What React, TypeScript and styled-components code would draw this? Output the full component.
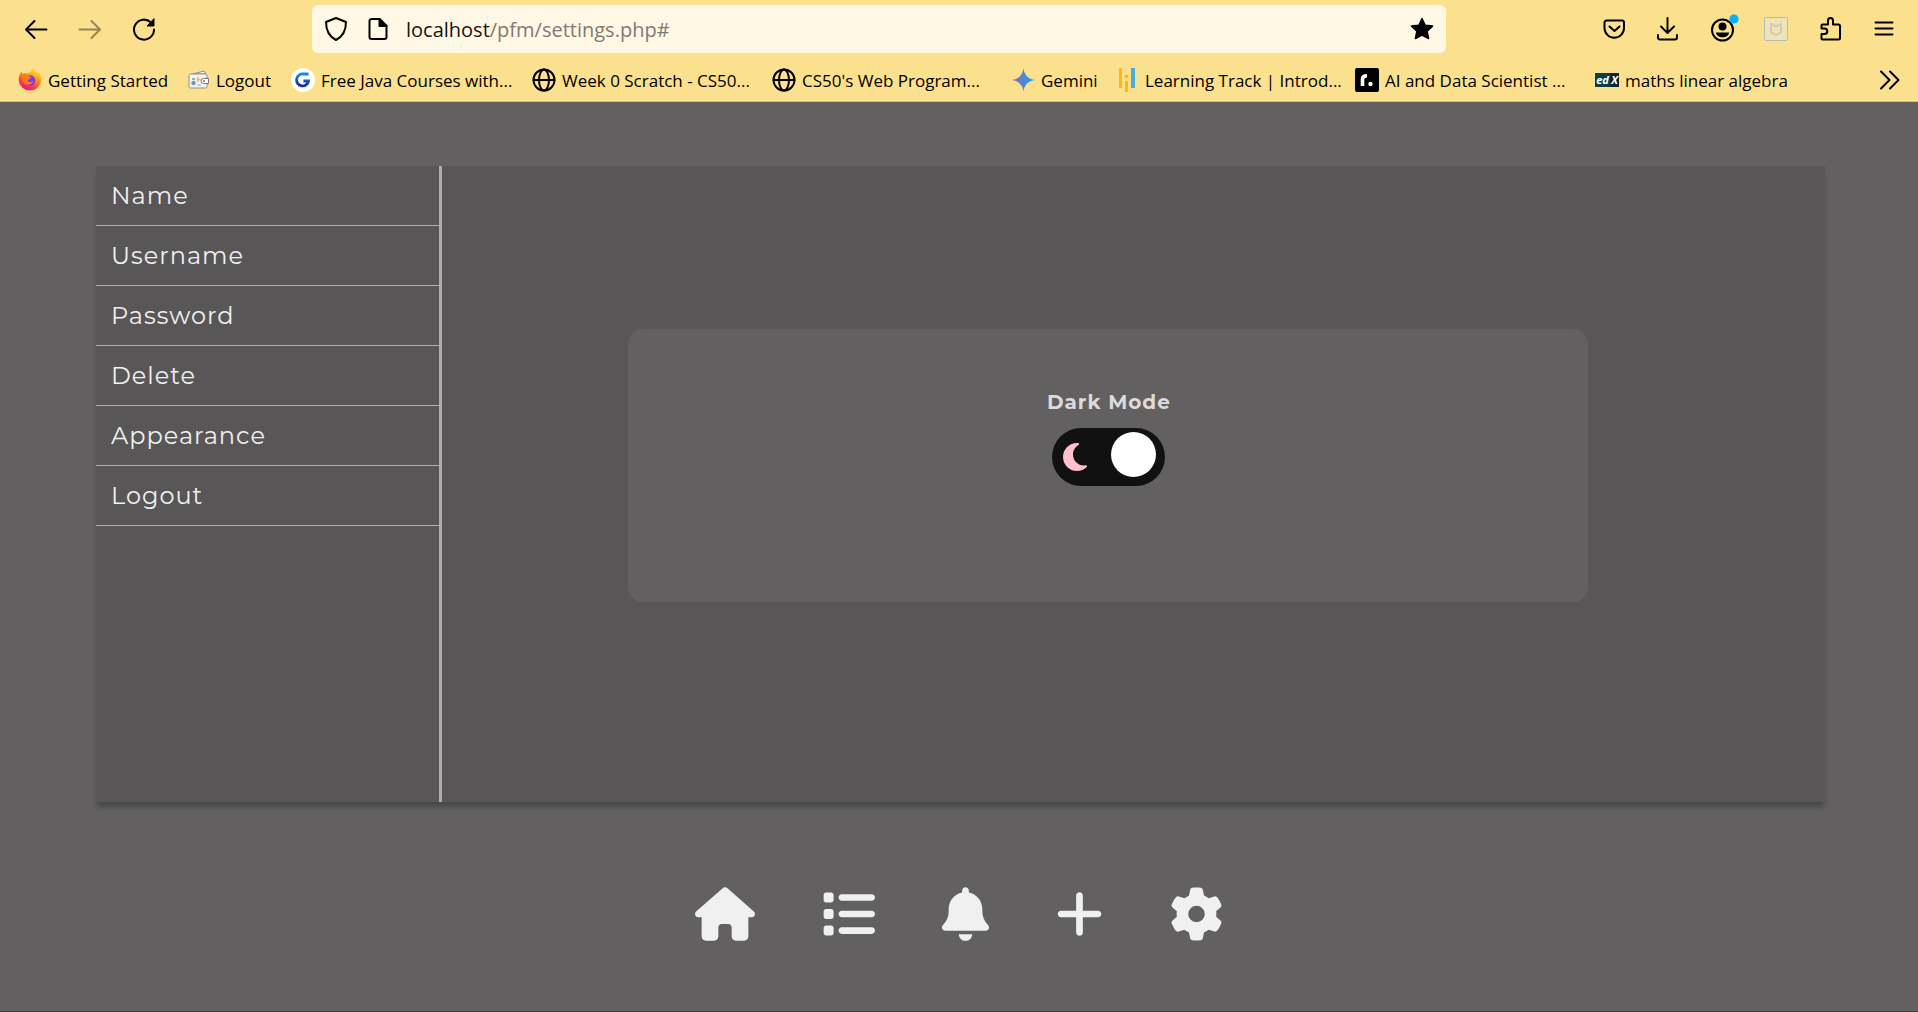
import React from "react";
import styled, { createGlobalStyle } from "styled-components";
import { FaHouse, FaList, FaBell, FaPlus, FaGear, FaMoon } from "react-icons/fa6";

const chromeFont = `"Segoe UI", "Open Sans", "Noto Sans", sans-serif`;

const GlobalStyle = createGlobalStyle`
  *, *::before, *::after { box-sizing: border-box; }
  html, body { margin: 0; padding: 0; }
  body { background: #636061; font-family: Montserrat, Inter, "Open Sans", sans-serif; }
  a { color: inherit; text-decoration: none; }
  ul { list-style: none; margin: 0; padding: 0; }
`;

const Page = styled.div`
  min-height: 100vh;
  display: flex;
  flex-direction: column;
  border-bottom: 1px solid #3c3b3b;
`;

const Chrome = styled.header`
  background: #fbe08d;
  border-bottom: 1px solid #dcc067;
  font-family: ${chromeFont};
  color: #15141a;
`;

const Toolbar = styled.div`
  display: flex;
  align-items: center;
  height: 58px;
  padding: 0 20px 0 22px;
`;

const Group = styled.div<{ $gap: number }>`
  display: flex;
  align-items: center;
  gap: ${(p) => p.$gap}px;
`;

const IconButton = styled.button<{ $faded?: boolean }>`
  display: flex;
  align-items: center;
  justify-content: center;
  width: 28px;
  height: 28px;
  padding: 0;
  border: 0;
  background: none;
  color: #000;
  opacity: ${(p) => (p.$faded ? 0.4 : 1)};

  svg { overflow: visible; }
`;

const AddressBar = styled.div`
  display: flex;
  align-items: center;
  flex: 1;
  height: 48px;
  margin: 0 154px;
  padding: 0 10px;
  gap: 14px;
  border-radius: 6px;
  background: #fff8e4;
`;

const AddressField = styled.div`
  position: relative;
  flex: 1;
  height: 30px;
  font-size: 20px;
  line-height: 32px;
`;

const AddressInput = styled.input`
  display: block;
  width: 100%;
  height: 30px;
  padding: 0;
  border: 0;
  outline: 0;
  background: none;
  font: inherit;
  color: transparent;
`;

const AddressText = styled.div`
  position: absolute;
  inset: 0;
  pointer-events: none;
  color: #7e7b74;
  white-space: nowrap;
`;

const Host = styled.span`
  color: #15141a;
`;

const Bookmarks = styled.nav`
  display: flex;
  align-items: center;
  height: 43px;
  padding: 0 14px 0 18px;
`;

const Bookmark = styled.a<{ $width: number }>`
  display: flex;
  align-items: center;
  gap: 6px;
  width: ${(p) => p.$width}px;
  font-size: 17px;
  line-height: 24px;
  color: #000;
  white-space: nowrap;
`;

const BookmarkText = styled.span`
  padding-top: 2px;
`;

const Push = styled.div`
  margin-left: auto;
`;

const Panel = styled.main`
  display: flex;
  min-height: 636px;
  margin: 64px 93px 0 96px;
  background: #595657;
  box-shadow: 0 6px 5px -1px #494848;
`;

const Sidebar = styled.nav`
  flex: 0 0 20%;
  border-right: 3px solid #b0aeae;
`;

const SidebarLink = styled.a`
  display: block;
  padding: 15px 15px 14px;
  border-bottom: 1px solid #b0aeae;
  font-size: 24px;
  line-height: 30px;
  letter-spacing: 1px;
  color: #f0f0f0;
`;

const Content = styled.section`
  flex: 1;
  padding: 163px 237px 200px 186px;
`;

const Card = styled.div`
  display: flex;
  flex-direction: column;
  align-items: center;
  height: 273px;
  padding: 60px 0 0 2px;
  border-radius: 15px;
  background: #636061;
`;

const ModeLabel = styled.label`
  display: flex;
  flex-direction: column;
  align-items: center;
  gap: 13px;
  font-size: 20px;
  font-weight: 700;
  line-height: 26px;
  letter-spacing: 1px;
  color: #dcdada;
`;

const Track = styled.span`
  display: flex;
  align-items: center;
  justify-content: space-between;
  width: 113px;
  height: 58px;
  padding: 0 9px 0 11px;
  border-radius: 29px;
  background: #111;
  color: pink;

  svg { width: 24px; height: 32px; }
`;

const Knob = styled.span`
  width: 45px;
  height: 45px;
  margin-bottom: 5px;
  border-radius: 50%;
  background: #fff;
`;

const HiddenCheckbox = styled.input`
  position: absolute;
  opacity: 0;
`;

const Dock = styled.nav`
  display: flex;
  justify-content: center;
  gap: 67px;
  margin: 85px 0 70px;
  color: #f0f0f0;
`;

const DockLink = styled.a<{ $width: number }>`
  display: flex;

  svg { width: ${(p) => p.$width}px; height: 54px; }
`;

type IconProps = { children: React.ReactNode; size?: number; box?: number };

const Line = ({ children, size = 24, box = 24 }: IconProps) => (
  <svg
    width={size}
    height={size}
    viewBox={`0 0 ${box} ${box}`}
    fill="none"
    stroke="currentColor"
    strokeWidth="2"
    strokeLinecap="round"
    strokeLinejoin="round"
    aria-hidden="true"
  >
    {children}
  </svg>
);

const Globe = () => (
  <Line>
    <circle cx="12" cy="12" r="10.5" />
    <ellipse cx="12" cy="12" rx="5" ry="10.5" />
    <path d="M1.5 12h21" />
  </Line>
);

const Firefox = () => (
  <svg width="24" height="24" viewBox="0 0 24 24" aria-hidden="true">
    <defs>
      <linearGradient id="flame" x1="0.8" y1="0" x2="0.3" y2="1">
        <stop offset="0" stopColor="#fff14a" />
        <stop offset="0.4" stopColor="#ff980e" />
        <stop offset="0.75" stopColor="#ff3647" />
        <stop offset="1" stopColor="#e31587" />
      </linearGradient>
    </defs>
    <path
      d="M15 0c2 2 3 3 3.600 5 1-.2 1.200-.8 1.400-1.400 2.600 3 3.400 6 3 10A11.300 11.300 0 0 1 .7 12.500C.5 8.500 2 5.500 3.500 3.500L4.500 6C6 4.800 7.500 5 8.500 5.500 10 6 11 4 13 4c0-1.500.8-3 2-4z"
      fill="url(#flame)"
    />
    <circle cx="12" cy="12.500" r="5.200" fill="#7a3be0" />
    <path d="M4.500 7c3-1 5.500 0 6.500 1.200 2 .2 2.500 1 2.400 1.800-2 .2-2.400 1.500-4 2.500 1.500 2 4 1.500 6 .5-1 3.500-6 5-9.500 2.500C4 13.500 4 10 4.500 7z" fill="#ff7a1c" />
  </svg>
);

const Wallet = () => (
  <svg width="22" height="22" viewBox="0 0 22 22" aria-hidden="true">
    <path d="M5 5L16 2l2 3z" fill="#fff" stroke="#8a8a8a" />
    <rect x="1" y="5" width="18" height="14" rx="1.500" fill="#f4f3ee" stroke="#8f8f8f" />
    <path d="M15.500 9.500h5v5h-5a2.500 2.500 0 0 1 0-5z" fill="#fff" stroke="#777" />
    <circle cx="16" cy="12" r="1" fill="#777" />
    <circle cx="5.500" cy="14" r="2.200" fill="#6a9db8" />
    <path d="M4 9h3v2H4z" fill="#8fb5c6" />
    <path d="M10 8v5M8.500 10.500h4" stroke="#f0bf55" strokeWidth="1.500" />
    <path d="M9 16h4" stroke="#b9c9b0" strokeWidth="1.500" />
  </svg>
);

const GreatLearning = () => (
  <svg width="24" height="24" viewBox="0 0 24 24" aria-hidden="true">
    <defs>
      <linearGradient id="gl" x1="0" y1="0" x2="0" y2="1">
        <stop offset="0" stopColor="#1c86e8" />
        <stop offset="1" stopColor="#1229a8" />
      </linearGradient>
    </defs>
    <circle cx="12" cy="12" r="12" fill="#fff" />
    <path d="M17.500 6h-5a6 6 0 1 0 5 7h-5" fill="none" stroke="url(#gl)" strokeWidth="2.800" />
  </svg>
);

const Gemini = () => (
  <svg width="23" height="24" viewBox="0 0 24 24" aria-hidden="true">
    <defs>
      <linearGradient id="gem" x1="0" y1="0.500" x2="1" y2="0.500">
        <stop offset="0" stopColor="#9168c0" />
        <stop offset="0.450" stopColor="#5684d1" />
        <stop offset="1" stopColor="#1ba1e3" />
      </linearGradient>
    </defs>
    <path d="M12 0c1 7 5 11 12 12-7 1-11 5-12 12-1-7-5-11-12-12 7-1 11-5 12-12z" fill="url(#gem)" />
  </svg>
);

const Bars = () => (
  <svg width="24" height="24" viewBox="0 0 24 24" aria-hidden="true">
    <path d="M4 0h3v20H4zM10 13h3v11h-3z" fill="#fbb914" />
    <circle cx="11.500" cy="8.500" r="2" fill="#fbb914" />
    <path d="M16 0h4v20h-4z" fill="#45aedb" />
  </svg>
);

const Roadmap = () => (
  <svg width="24" height="24" viewBox="0 0 24 24" aria-hidden="true">
    <rect width="24" height="24" rx="2" fill="#000" />
    <path d="M7.500 18v-7c0-2.200 1.500-3.300 4.500-3.300" fill="none" stroke="#fff" strokeWidth="3.600" />
    <circle cx="15.500" cy="16" r="2.200" fill="#fff" />
  </svg>
);

const Badge = styled.span`
  display: flex;
  width: 24px;
  color: #fff;
  font-size: 11px;
  font-style: italic;
  font-weight: 700;
  line-height: 13px;
`;

const BadgePart = styled.span<{ $dark?: boolean }>`
  flex: 1 0 auto;
  height: 14px;
  text-align: center;
  background: ${(p) => (p.$dark ? "#10262b" : "#0b4046")};
`;

const bookmarks = [
  { label: "Getting Started", width: 170, icon: <Firefox /> },
  { label: "Logout", width: 103, icon: <Wallet /> },
  { label: "Free Java Courses with...", width: 241, icon: <GreatLearning /> },
  { label: "Week 0 Scratch - CS50...", width: 240, icon: <Globe /> },
  { label: "CS50's Web Program...", width: 240, icon: <Globe /> },
  { label: "Gemini", width: 103, icon: <Gemini /> },
  { label: "Learning Track | Introd...", width: 240, icon: <Bars /> },
  { label: "AI and Data Scientist ...", width: 240, icon: <Roadmap /> },
  {
    label: "maths linear algebra",
    width: 240,
    icon: (
      <Badge>
        <BadgePart>ed</BadgePart>
        <BadgePart $dark>X</BadgePart>
      </Badge>
    ),
  },
];

const dock = [
  { label: "Home", width: 60, icon: <FaHouse /> },
  { label: "List", width: 53, icon: <FaList /> },
  { label: "Notifications", width: 47, icon: <FaBell /> },
  { label: "Add", width: 47, icon: <FaPlus /> },
  { label: "Settings", width: 53, icon: <FaGear /> },
];

const sections = ["Name", "Username", "Password", "Delete", "Appearance", "Logout"];

export default function App() {
  return (
    <Page>
      <GlobalStyle />
      <Chrome>
        <Toolbar>
          <Group $gap={26}>
            <IconButton aria-label="Back">
              <Line><path d="M22.500 12.500H2M10.500 4L2 12.500l8.500 8.500" /></Line>
            </IconButton>
            <IconButton aria-label="Forward" $faded>
              <Line><path d="M1.500 12.500H22M13.500 4l8.500 8.500-8.500 8.500" /></Line>
            </IconButton>
            <IconButton aria-label="Reload">
              <Line>
                <path d="M22 12.500A10 10 0 1 1 19 5.500" />
                <path d="M22 2v7h-6.500z" fill="currentColor" strokeWidth="1" />
              </Line>
            </IconButton>
          </Group>
          <AddressBar>
            <IconButton aria-label="Tracking protection">
              <Line><path d="M12 1L22 5c0 8-2 14-10 18C4 19 2 13 2 5z" /></Line>
            </IconButton>
            <IconButton aria-label="Site information">
              <Line>
                <path d="M5.500 2h8L20.500 9v11a2 2 0 0 1-2 2h-13a2 2 0 0 1-2-2V4a2 2 0 0 1 2-2z" />
                <path d="M13.500 2v7h7z" fill="currentColor" />
              </Line>
            </IconButton>
            <AddressField>
              <AddressInput aria-label="Address" />
              <AddressText>
                <Host>localhost</Host>/pfm/settings.php#
              </AddressText>
            </AddressField>
            <IconButton aria-label="Edit bookmark">
              <svg width="24" height="24" viewBox="0 0 24 24" aria-hidden="true">
                <path d="M12 1.500l3.200 6.700 7.300.9-5.400 5 1.500 7.400L12 18l-6.600 3.500 1.500-7.400-5.400-5 7.300-.9z" stroke="#000" strokeWidth="1.500" strokeLinejoin="round" />
              </svg>
            </IconButton>
          </AddressBar>
          <Group $gap={26}>
            <IconButton aria-label="Pocket">
              <Line>
                <path d="M4.500 3.500H20a2 2 0 0 1 2 2v5.500a9.700 9.700 0 0 1-19.500 0V5.500a2 2 0 0 1 2-2z" />
                <path d="M7.500 9.500l5 4.500 5-4.500" />
              </Line>
            </IconButton>
            <IconButton aria-label="Downloads">
              <Line><path d="M11.500 1v14.500M5 9.500l6.500 6.500L18 9.500M2 18v2.500a2 2 0 0 0 2 2h15a2 2 0 0 0 2-2V18" /></Line>
            </IconButton>
            <IconButton aria-label="Account">
              <svg width="28" height="28" viewBox="0 0 28 28" fill="none" aria-hidden="true">
                <circle cx="14.500" cy="15" r="10.500" stroke="#000" strokeWidth="2" />
                <circle cx="14.500" cy="11.500" r="4" fill="#000" />
                <path d="M8 17.500h13c0 3-3 4.800-6.500 4.800S8 20.500 8 17.500z" fill="#000" />
                <circle cx="26" cy="4" r="4.600" fill="#00b3ff" />
              </svg>
            </IconButton>
            <IconButton aria-label="Web protection">
              <svg width="24" height="24" viewBox="0 0 24 24" fill="none" aria-hidden="true">
                <rect x="0.500" y="0.500" width="23" height="23" rx="1" fill="#f0e3b6" stroke="#b3bcbd" />
                <path d="M7 7l5 2.500L17 7v8.500l-5 2.500-5-2.500z" stroke="#d0ccb8" strokeWidth="2" />
              </svg>
            </IconButton>
            <IconButton aria-label="Extensions">
              <Line>
                <path d="M4.500 22.500a1 1 0 0 1-1-1V17h3a2.800 2.800 0 0 0 0-5.600h-3V8.500a1 1 0 0 1 1-1H10V3.500a2.500 2.500 0 0 1 5 0v4h5.500A1.500 1.500 0 0 1 22 9v12a1.500 1.500 0 0 1-1.500 1.500z" />
              </Line>
            </IconButton>
            <IconButton aria-label="Menu">
              <Line><path d="M3.500 5.500h17M3.500 11.500h17M3.500 17.500h17" /></Line>
            </IconButton>
          </Group>
        </Toolbar>
        <Bookmarks aria-label="Bookmarks">
          {bookmarks.map((b) => (
            <Bookmark key={b.label} href="#" $width={b.width}>
              {b.icon}
              <BookmarkText>{b.label}</BookmarkText>
            </Bookmark>
          ))}
          <Push>
            <IconButton aria-label="More bookmarks">
              <Line><path d="M3 3.500l8.500 8.500L3 20.500M12 3.500l8.500 8.500-8.500 8.500" /></Line>
            </IconButton>
          </Push>
        </Bookmarks>
      </Chrome>
      <Panel>
        <Sidebar aria-label="Settings sections">
          <ul>
            {sections.map((s) => (
              <li key={s}>
                <SidebarLink href="#">{s}</SidebarLink>
              </li>
            ))}
          </ul>
        </Sidebar>
        <Content>
          <Card>
            <ModeLabel>
              Dark Mode
              <HiddenCheckbox type="checkbox" defaultChecked />
              <Track>
                <FaMoon />
                <Knob />
              </Track>
            </ModeLabel>
          </Card>
        </Content>
      </Panel>
      <Dock aria-label="Main">
        {dock.map((d) => (
          <DockLink key={d.label} href="#" aria-label={d.label} $width={d.width}>
            {d.icon}
          </DockLink>
        ))}
      </Dock>
    </Page>
  );
}
